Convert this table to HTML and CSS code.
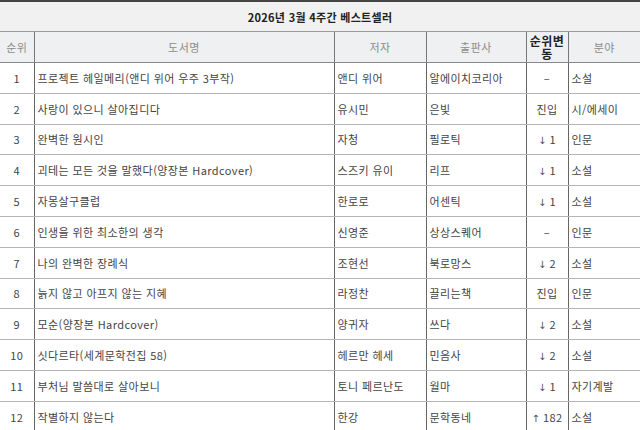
FILE: index.html
```html
<!DOCTYPE html>
<html lang="ko">
<head>
<meta charset="utf-8">
<link rel="stylesheet" href="styles.css">
</head>
<body>
<table class="best">
  <colgroup>
    <col class="c-rank"><col class="c-title"><col class="c-author"><col class="c-pub"><col class="c-chg"><col class="c-genre">
  </colgroup>
  <thead>
    <tr class="caption-row"><th colspan="6">2026년 3월 4주간 베스트셀러</th></tr>
    <tr class="head-row">
      <th>순위</th><th>도서명</th><th>저자</th><th>출판사</th><th class="strong">순위변동</th><th>분야</th>
    </tr>
  </thead>
  <tbody>
    <tr><td class="ctr">1</td><td>프로젝트 헤일메리(앤디 위어 우주 3부작)</td><td>앤디 위어</td><td>알에이치코리아</td><td class="ctr">–</td><td>소설</td></tr>
    <tr><td class="ctr">2</td><td>사랑이 있으니 살아집디다</td><td>유시민</td><td>은빛</td><td class="ctr">진입</td><td>시/에세이</td></tr>
    <tr><td class="ctr">3</td><td>완벽한 원시인</td><td>자청</td><td>필로틱</td><td class="ctr"><span class="arr">↓</span> 1</td><td>인문</td></tr>
    <tr><td class="ctr">4</td><td>괴테는 모든 것을 말했다(양장본 Hardcover)</td><td>스즈키 유이</td><td>리프</td><td class="ctr"><span class="arr">↓</span> 1</td><td>소설</td></tr>
    <tr><td class="ctr">5</td><td>자몽살구클럽</td><td>한로로</td><td>어센틱</td><td class="ctr"><span class="arr">↓</span> 1</td><td>소설</td></tr>
    <tr><td class="ctr">6</td><td>인생을 위한 최소한의 생각</td><td>신영준</td><td>상상스퀘어</td><td class="ctr">–</td><td>인문</td></tr>
    <tr><td class="ctr">7</td><td>나의 완벽한 장례식</td><td>조현선</td><td>북로망스</td><td class="ctr"><span class="arr">↓</span> 2</td><td>소설</td></tr>
    <tr><td class="ctr">8</td><td>늙지 않고 아프지 않는 지혜</td><td>라정찬</td><td>끌리는책</td><td class="ctr">진입</td><td>인문</td></tr>
    <tr><td class="ctr">9</td><td>모순(양장본 Hardcover)</td><td>양귀자</td><td>쓰다</td><td class="ctr"><span class="arr">↓</span> 2</td><td>소설</td></tr>
    <tr><td class="ctr">10</td><td>싯다르타(세계문학전집 58)</td><td>헤르만 헤세</td><td>민음사</td><td class="ctr"><span class="arr">↓</span> 2</td><td>소설</td></tr>
    <tr><td class="ctr">11</td><td>부처님 말씀대로 살아보니</td><td>토니 페르난도</td><td>월마</td><td class="ctr"><span class="arr">↓</span> 1</td><td>자기계발</td></tr>
    <tr><td class="ctr">12</td><td>작별하지 않는다</td><td>한강</td><td>문학동네</td><td class="ctr"><span class="arr">↑</span> 182</td><td>소설</td></tr>
  </tbody>
</table>
</body>
</html>
```
FILE: styles.css
```css
html, body {
  margin: 0;
  padding: 0;
  background: #ffffff;
}
body {
  font-family: "Noto Sans CJK KR", "Noto Sans", sans-serif;
  font-size: 11px;
  color: #333333;
}
.best {
  width: 640px;
  border-collapse: collapse;
  table-layout: fixed;
  border-top: 2px solid #444444;
}
.c-rank { width: 34px; }
.c-title { width: 300px; }
.c-author { width: 92px; }
.c-pub { width: 100px; }
.c-chg { width: 42px; }
.c-genre { width: 72px; }

.caption-row th {
  height: 29px;
  padding: 0;
  background: #f1f1f1;
  font-weight: bold;
  color: #222222;
  font-size: 11px;
  letter-spacing: 0.3px;
  text-align: center;
  border-bottom: 1px solid #9a9a9a;
}
.head-row th {
  height: 30px;
  padding: 0 2px;
  background: #eef0f2;
  color: #8c8c8c;
  font-weight: normal;
  text-align: center;
  line-height: 13px;
  letter-spacing: 0.5px;
  border-bottom: 1px solid #888888;
  border-left: 1px solid #777777;
}
.head-row th:first-child { border-left: none; }
.head-row th.strong {
  color: #222222;
  font-weight: bold;
  font-size: 12px;
  letter-spacing: 0.5px;
}
tbody td {
  height: 29.8px;
  padding: 0 3px;
  border-bottom: 1px solid #b5b5b5;
  border-left: 1px solid #666666;
  white-space: nowrap;
  overflow: hidden;
  color: #444444;
  letter-spacing: 0.4px;
}
tbody td:first-child { border-left: none; }
tbody td.ctr { text-align: center; }
.arr {
  font-family: "DejaVu Sans", sans-serif;
  font-size: 10px;
  color: #555555;
}
```
